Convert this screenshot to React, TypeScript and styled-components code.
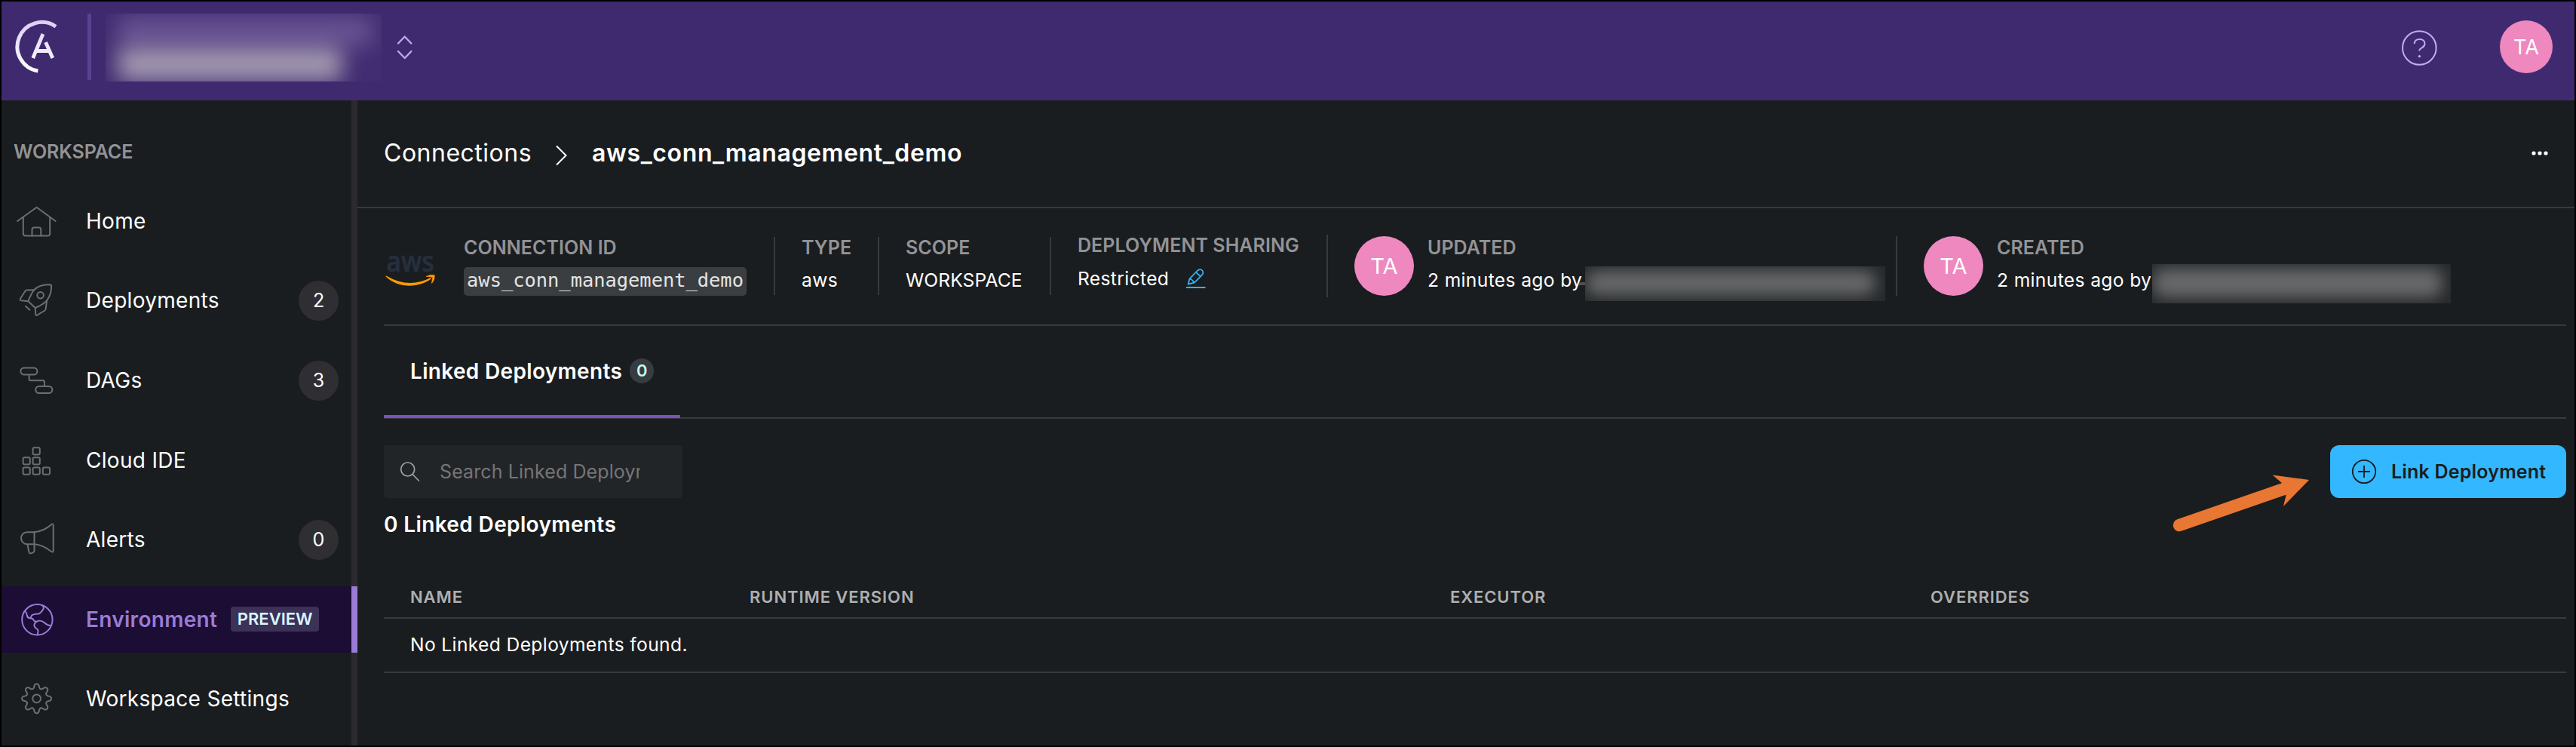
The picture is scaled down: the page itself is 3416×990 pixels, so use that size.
import React from "react";
import styled, { createGlobalStyle } from "styled-components";

const color = {
  bg: "#1a1d1f",
  header: "#3f2a70",
  line: "#38393d",
  muted: "#929396",
  icon: "#6d6e71",
  lilac: "#9a7bd6",
  pink: "#ee88bf",
  blue: "#33b8ff",
};

const GlobalStyle = createGlobalStyle`
  *, *::before, *::after { box-sizing: border-box; }
  body {
    margin: 0;
    background: #000;
    font-family: Inter, "Liberation Sans", sans-serif;
  }
`;

const Page = styled.div`
  display: flex;
  flex-direction: column;
  width: 3416px;
  height: 990px;
  border: 2px solid #000;
  background: ${color.bg};
  color: #fff;
  overflow: hidden;
`;

const Header = styled.header`
  display: flex;
  flex: none;
  height: 131px;
  padding: 0 29px 0 17px;
  background: ${color.header};
`;

const Logo = styled.svg`
  width: 60px;
  height: 76px;
  margin-top: 22px;
`;

const HeaderDivider = styled.div`
  width: 5px;
  height: 88px;
  margin: 16px 19px 0 37px;
  background: #5a4191;
`;

const RedactedName = styled.div`
  display: flex;
  flex-direction: column;
  width: 366px;
  height: 90px;
  margin-top: 16px;
  padding: 4px 10px 0 16px;
  background: #422d72;
  overflow: hidden;
`;

const Smudge = styled.div<{ $w: number; $h: number; $tint: string; $blur: number }>`
  flex: none;
  width: ${(p) => p.$w}px;
  height: ${(p) => p.$h}px;
  border-radius: 12px;
  background: ${(p) => p.$tint};
  filter: blur(${(p) => p.$blur}px);
`;

const Switcher = styled.svg`
  width: 24px;
  height: 36px;
  margin: 43px auto 0 19px;
`;

const HelpIcon = styled.svg`
  width: 48px;
  height: 48px;
  margin: 37px 83px 0 0;
`;

const Avatar = styled.div<{ $size: number; $font: number }>`
  display: flex;
  flex: none;
  align-items: center;
  justify-content: center;
  width: ${(p) => p.$size}px;
  height: ${(p) => p.$size}px;
  border-radius: 50%;
  background: ${color.pink};
  font-size: ${(p) => p.$font}px;
`;

const HeaderAvatar = styled(Avatar)`
  margin-top: 25px;
`;

const Body = styled.div`
  display: flex;
  flex: 1;
  min-height: 0;
`;

const Sidebar = styled.nav`
  display: flex;
  flex-direction: column;
  flex: none;
  width: 472px;
  box-shadow: inset -8px 0 0 #2b2b2f;
`;

const SidebarTitle = styled.div`
  height: 118px;
  padding: 48px 0 0 16px;
  color: ${color.muted};
  font-size: 25px;
  font-weight: 600;
  line-height: 40px;
  letter-spacing: -0.1px;
`;

const NavItem = styled.a<{ $active?: boolean }>`
  display: flex;
  flex: none;
  align-items: center;
  height: 88px;
  margin-bottom: 17.6px;
  padding: 0 25px 0 20px;
  color: ${(p) => (p.$active ? color.lilac : "#fff")};
  background: ${(p) => (p.$active ? "#1b0d34" : "transparent")};
  box-shadow: ${(p) => (p.$active ? `inset -8px 0 0 ${color.lilac}` : "none")};
  font-size: 28px;
  font-weight: ${(p) => (p.$active ? 600 : 400)};
  letter-spacing: 0.3px;
`;

const NavIcon = styled.svg<{ $active?: boolean }>`
  flex: none;
  width: 54px;
  height: 54px;
  margin-right: 38px;
  fill: none;
  stroke: ${(p) => (p.$active ? color.lilac : color.icon)};
  stroke-width: 2;
  stroke-linecap: round;
  stroke-linejoin: round;
`;

const NavCount = styled.span`
  display: flex;
  align-items: center;
  justify-content: center;
  width: 53px;
  height: 53px;
  margin-left: auto;
  border-radius: 50%;
  background: #2e2e33;
  font-size: 25px;
  letter-spacing: 0;
`;

const PreviewTag = styled.span`
  width: 117px;
  height: 33px;
  margin: -1px 0 0 18px;
  border-radius: 4px;
  background: #3c3157;
  color: #d9f6ff;
  font-size: 22px;
  font-weight: 600;
  line-height: 33px;
  letter-spacing: 0;
  text-align: center;
`;

const Main = styled.main`
  display: flex;
  flex: 1;
  flex-direction: column;
  min-width: 0;
`;

const Breadcrumb = styled.div`
  display: flex;
  flex: none;
  align-items: center;
  height: 143px;
  padding: 0 33px 2px 35px;
  border-bottom: 2px solid ${color.line};
  font-size: 32px;
`;

const Crumb = styled.span<{ $current?: boolean }>`
  font-weight: ${(p) => (p.$current ? 600 : 400)};
  letter-spacing: ${(p) => (p.$current ? 0.62 : 0.5)}px;
`;

const CrumbChevron = styled.svg`
  width: 20px;
  height: 30px;
  margin: 6px 31px 0 29px;
`;

const MoreIcon = styled.svg`
  width: 26px;
  height: 8px;
  margin-left: auto;
`;

const Content = styled.div`
  display: flex;
  flex-direction: column;
  padding: 0 11px 0 35px;
`;

const InfoRow = styled.section`
  display: flex;
  align-items: center;
  height: 156px;
  padding-bottom: 1px;
  border-bottom: 2px solid ${color.line};
`;

const AwsLogo = styled.svg`
  flex: none;
  width: 70px;
  height: 50px;
  margin: 16px 36px 0 0;
  overflow: visible;
`;

const Stat = styled.div<{ $w: number; $h: number; $pad: number; $gap?: number }>`
  display: flex;
  flex: none;
  flex-direction: column;
  gap: ${(p) => p.$gap ?? 9}px;
  width: ${(p) => p.$w}px;
  height: ${(p) => p.$h}px;
  padding-left: ${(p) => p.$pad}px;
  border-right: 2px solid ${color.line};
`;

const UserStat = styled.div<{ $w: number; $last?: boolean }>`
  display: flex;
  flex: none;
  width: ${(p) => p.$w}px;
  height: 79px;
  padding-left: 35px;
  border-right: ${(p) => (p.$last ? "none" : `2px solid ${color.line}`)};
`;

const UserText = styled.div`
  display: flex;
  flex-direction: column;
  gap: 9px;
  padding: 1px 0 0 18px;
`;

const StatLabel = styled.div`
  color: ${color.muted};
  font-size: 25px;
  font-weight: 600;
  line-height: 29px;
  letter-spacing: 0.05px;
  white-space: nowrap;
`;

const StatValue = styled.div<{ $caps?: boolean }>`
  display: flex;
  align-items: flex-start;
  height: 39px;
  font-size: 24.6px;
  line-height: 39px;
  letter-spacing: ${(p) => (p.$caps ? 0.1 : 0.36)}px;
  white-space: nowrap;
`;

const Timestamp = styled.span<{ $w: number }>`
  width: ${(p) => p.$w}px;
`;

const EmailEdge = styled.span`
  width: 8px;
  height: 4px;
  margin: 22px 0 0 -8px;
  background: #4d4f51;
`;

const Code = styled.code`
  width: 375px;
  height: 38px;
  margin-top: 2px;
  border-radius: 5px;
  background: #3b3e41;
  color: #e4e4e5;
  font-family: "DejaVu Sans Mono", monospace;
  font-size: 25.4px;
  line-height: 35px;
  letter-spacing: 0;
  text-align: center;
`;

const EditIcon = styled.svg`
  width: 28px;
  height: 28px;
  margin: 6px 0 0 23px;
`;

const RedactedUser = styled.div<{ $w: number; $h: number; $top: number }>`
  flex: none;
  width: ${(p) => p.$w}px;
  height: ${(p) => p.$h}px;
  margin-top: ${(p) => p.$top}px;
  padding: 6px 0 0 2px;
  background: #26292b;
  overflow: hidden;
`;

const Tabs = styled.div`
  display: flex;
  height: 123px;
  border-bottom: 2px solid ${color.line};
`;

const Tab = styled.div`
  display: flex;
  align-items: center;
  width: 393px;
  height: 122px;
  padding: 1px 0 0 35px;
  border-bottom: 4px solid #7a52bd;
  font-size: 28px;
  font-weight: 600;
  letter-spacing: 0.33px;
  white-space: nowrap;
`;

const TabCount = styled.span`
  width: 32px;
  height: 33px;
  margin-left: 10px;
  border-radius: 17px;
  background: #363c3f;
  color: #c8f5ee;
  font-size: 22px;
  line-height: 33px;
  letter-spacing: 0;
  text-align: center;
`;

const Toolbar = styled.div`
  display: flex;
  align-items: flex-start;
  height: 70px;
  margin-top: 35px;
`;

const SearchBox = styled.div`
  display: flex;
  align-items: center;
  width: 396px;
  height: 70px;
  margin-right: auto;
  padding: 0 0 0 21px;
  border-radius: 4px;
  background: #222528;
`;

const SearchIcon = styled.svg`
  width: 28px;
  height: 28px;
  margin: -1px 25px 0 0;
`;

const SearchPlaceholder = styled.span`
  width: 266px;
  color: #757577;
  font-size: 25px;
  line-height: 34px;
  letter-spacing: 0.1px;
  white-space: nowrap;
  overflow: hidden;
`;

const Arrow = styled.svg`
  width: 190px;
  height: 90px;
  margin: 36px 20px 0 0;
  overflow: visible;
`;

const LinkButton = styled.button`
  display: flex;
  align-items: center;
  width: 313px;
  height: 70px;
  padding: 0 0 0 28px;
  border: 0;
  border-radius: 12px;
  background: ${color.blue};
  color: #1a1d20;
  font: 600 25px/34px Inter, sans-serif;
  letter-spacing: 0.2px;
  white-space: nowrap;
`;

const PlusIcon = styled.svg`
  width: 34px;
  height: 34px;
  margin-right: 19px;
`;

const ListTitle = styled.h2`
  margin: 15px 0 49px;
  font-size: 28px;
  font-weight: 600;
  line-height: 40px;
  letter-spacing: 0.37px;
`;

const Columns = styled.div`
  display: grid;
  grid-template-columns: 450px 929px 637px 1fr;
  height: 56px;
  padding-left: 35px;
  border-bottom: 2px solid ${color.line};
  color: #aeafb1;
  font-size: 22px;
  font-weight: 600;
  line-height: 54px;
  letter-spacing: 0.92px;
`;

const EmptyRow = styled.div`
  height: 72px;
  padding-left: 35px;
  border-bottom: 2px solid ${color.line};
  font-size: 24.6px;
  line-height: 69px;
  letter-spacing: 0.37px;
`;

const gearPath = (() => {
  const points: string[] = [];
  for (let i = 0; i < 144; i++) {
    const t = (i / 144) * Math.PI * 2;
    const c = Math.cos(8 * t);
    const r = 16.6 + 2.9 * Math.sign(c) * Math.pow(Math.abs(c), 0.65);
    points.push(`${(26.6 + r * Math.cos(t)).toFixed(2)} ${(26.8 + r * Math.sin(t)).toFixed(2)}`);
  }
  return `M${points.join("L")}Z`;
})();

const ideCells = [
  [26.2, 14.8],
  [13.2, 27.8],
  [26.2, 27.8],
  [13.2, 41.2],
  [26.2, 41.2],
  [39.4, 41.2],
];

type NavEntry = { label: string; count?: number; active?: boolean; icon: React.ReactNode };

const nav: NavEntry[] = [
  {
    label: "Home",
    icon: (
      <>
        <path d="M1.2 27L26.6 8.8L51.6 27" />
        <path d="M8.8 22V43.5a3 3 0 0 0 3 3H41.2a3 3 0 0 0 3-3V22" />
        <path d="M20.5 46.5V38.5a3 3 0 0 1 3-3H29.3a3 3 0 0 1 3 3V46.5" />
      </>
    ),
  },
  {
    label: "Deployments",
    count: 2,
    icon: (
      <>
        <path d="M45.2 6.4C36 5.6 27.500 8.600 23 13.500C19.500 18 17.500 22.500 15.400 28.200L24.700 37C31 34.500 36.500 31.500 40.200 27.200C44.500 21 46.600 14 46.100 7.400Q46 6.500 45.200 6.400Z" />
        <circle cx="31.600" cy="20.300" r="4.300" />
        <path d="M23 13.300L13.500 13.600Q12 13.700 11.300 15L4.900 25Q4.400 26.800 6 27.200L15.400 28.200" />
        <path d="M24.700 37L25.300 45.500Q25.600 47.600 27.400 46.600L37.400 40.500Q38.600 39.600 38.700 38.200L40.200 27.200" />
        <path d="M12 34.700L17.400 39.800" />
      </>
    ),
  },
  {
    label: "DAGs",
    count: 3,
    icon: (
      <>
        <rect x="5.400" y="10.500" width="22" height="9" rx="4.500" />
        <rect x="25.300" y="35" width="22" height="9" rx="4.500" />
        <path d="M16.600 20V25.500Q16.600 27.300 18.400 27.300H35.100Q36.900 27.300 36.900 29.100V34.600" />
      </>
    ),
  },
  {
    label: "Cloud IDE",
    icon: ideCells.map(([x, y]) => (
      <rect key={`${x}-${y}`} x={x - 4.6} y={y - 4.6} width="9.2" height="9.2" rx="2" />
    )),
  },
  {
    label: "Alerts",
    count: 0,
    icon: (
      <>
        <path d="M23.500 17.200H14a8 8 0 0 0 0 16H23.500" />
        <path d="M23.500 17.200C33 16.500 40 12.500 46 7.200Q48.700 5.500 48.700 8.500V42Q48.700 44.500 46 43C40 38 33 33.800 23.500 33.200Z" />
        <path d="M14.400 33.800L16.500 43.800Q17 45.600 18.500 45.400L21.500 44.600Q23.300 44 23.500 42.200V33.200" />
      </>
    ),
  },
  {
    label: "Environment",
    active: true,
    icon: (
      <>
        <circle cx="27.400" cy="27.300" r="20.200" />
        <path d="M34 8.300Q37.500 10.500 34.600 14.500C32.500 17 31.500 19.300 28.500 19.600C23 20 20 20.500 19.600 22.500Q19.300 24.500 17.800 25.200" />
        <path d="M11.300 15.500Q13.600 18.500 13.800 21.500Q14.300 25 17.800 25.200Q22 25.200 22.700 28Q23.300 29.800 26 29.600" />
        <path d="M45.600 35.400C41 34.500 38.500 33 36.500 31C34 29 30 28 27.500 29.300C24.500 30.800 23 33 23.600 35.800C24 38.500 27.500 38.800 28.500 41.500C29 43.500 27.500 44.800 27.900 47.300" />
      </>
    ),
  },
  {
    label: "Workspace Settings",
    icon: (
      <>
        <path d={gearPath} />
        <circle cx="26.600" cy="26.800" r="5.400" />
      </>
    ),
  },
];

export default function App() {
  return (
    <>
      <GlobalStyle />
      <Page>
        <Header>
          <Logo viewBox="19 24 60 76" fill="none" stroke="url(#logoFill)">
            <defs>
              <linearGradient id="logoFill" gradientUnits="userSpaceOnUse" x1="48" y1="27" x2="48" y2="97">
                <stop offset="0" stopColor="#dccff5" />
                <stop offset="1" stopColor="#ffffff" />
              </linearGradient>
            </defs>
            <path d="M74 35.200A32.500 32.500 0 1 0 50.300 94" strokeWidth="5" />
            <path d="M43.700 77L57 45M60.600 56L69.800 77M49 67.500H66" strokeWidth="4.800" />
          </Logo>
          <HeaderDivider />
          <RedactedName>
            <Smudge $w={338} $h={40} $tint="rgba(130,108,168,0.6)" $blur={14} />
            <Smudge $w={298} $h={46} $tint="rgba(165,156,178,0.95)" $blur={14} />
          </RedactedName>
          <Switcher viewBox="525 45 24 36" fill="none" stroke="#c6aaf7" strokeWidth="2.2" strokeLinecap="round" strokeLinejoin="round">
            <path d="M528 57.500L536.700 48.500L545.400 57.500M528 68L536.700 77L545.400 68" />
          </Switcher>
          <HelpIcon viewBox="0 0 48 48" fill="none" stroke="#c6aaf7" strokeWidth="2" strokeLinecap="round">
            <circle cx="24.300" cy="24.500" r="22.300" />
            <path d="M17.600 18.200C18.300 14.500 21 12.900 24.600 12.900C28.700 12.900 31.500 15.400 31.500 19C31.500 24.500 25.500 23.800 24.300 27.500" />
            <circle cx="24.400" cy="35.600" r="1.700" fill="#c6aaf7" stroke="none" />
          </HelpIcon>
          <HeaderAvatar $size={70} $font={27}>TA</HeaderAvatar>
        </Header>
        <Body>
          <Sidebar>
            <SidebarTitle>WORKSPACE</SidebarTitle>
            {nav.map((item) => (
              <NavItem key={item.label} $active={item.active}>
                <NavIcon viewBox="0 0 54 54" $active={item.active}>
                  {item.icon}
                </NavIcon>
                {item.label}
                {item.count !== undefined && <NavCount>{item.count}</NavCount>}
                {item.active && <PreviewTag>PREVIEW</PreviewTag>}
              </NavItem>
            ))}
          </Sidebar>
          <Main>
            <Breadcrumb>
              <Crumb>Connections</Crumb>
              <CrumbChevron viewBox="0 0 20 30" fill="none" stroke="#fff" strokeWidth="2">
                <path d="M4 2.500L16.500 15L4 27.500" />
              </CrumbChevron>
              <Crumb $current>aws_conn_management_demo</Crumb>
              <MoreIcon viewBox="0 0 26 8" fill="#fff">
                <circle cx="5" cy="4" r="2.600" />
                <circle cx="13" cy="4" r="2.600" />
                <circle cx="21" cy="4" r="2.600" />
              </MoreIcon>
            </Breadcrumb>
            <Content>
              <InfoRow>
                <AwsLogo viewBox="509 335 70 50">
                  <text x="512.500" y="358.500" fill="#252f3e" stroke="#252f3e" strokeWidth="0.700" fontFamily="Open Sans" fontWeight="600" fontSize="37" textLength="63" lengthAdjust="spacingAndGlyphs">
                    aws
                  </text>
                  <path d="M511.700 364.200Q542 382 570 367.500Q572.500 366.800 571.500 368.800C556 380.500 528 382 511.700 365.500Z" fill="#ff9900" />
                  <path d="M565 365.500Q571 362 576.200 363.700Q577.200 369 572.600 374.500Q572.200 374 573.800 367Q572 365.300 565 365.500Z" fill="#ff9900" stroke="#ff9900" strokeWidth="0.600" />
                </AwsLogo>
                <Stat $w={413} $h={77} $pad={0}>
                  <StatLabel>CONNECTION ID</StatLabel>
                  <StatValue>
                    <Code>aws_conn_management_demo</Code>
                  </StatValue>
                </Stat>
                <Stat $w={138} $h={77} $pad={35}>
                  <StatLabel>TYPE</StatLabel>
                  <StatValue>aws</StatValue>
                </Stat>
                <Stat $w={228} $h={77} $pad={35}>
                  <StatLabel>SCOPE</StatLabel>
                  <StatValue $caps>WORKSPACE</StatValue>
                </Stat>
                <Stat $w={367} $h={83} $pad={35} $gap={10}>
                  <StatLabel>DEPLOYMENT SHARING</StatLabel>
                  <StatValue>
                    Restricted
                    <EditIcon viewBox="0 0 28 28" fill="none" stroke="#33b0f5" strokeWidth="1.800" strokeLinejoin="round">
                      <path d="M2.600 20.500L4.600 13.300L14.500 3Q18.500 -0.500 21.300 2.500Q23.800 5.500 20.600 8.800L10.800 18.700Z" />
                      <path d="M13 4.800L19.200 10.500M4.600 13.500Q8.500 14.500 10.600 18.500" />
                      <path d="M0 25H25.500" strokeWidth="2" />
                    </EditIcon>
                  </StatValue>
                </Stat>
                <UserStat $w={755}>
                  <Avatar $size={79} $font={29}>TA</Avatar>
                  <UserText>
                    <StatLabel>UPDATED</StatLabel>
                    <StatValue>
                      <Timestamp $w={209}>2 minutes ago by</Timestamp>
                      <EmailEdge />
                      <RedactedUser $w={398} $h={46} $top={1}>
                        <Smudge $w={382} $h={32} $tint="#68696b" $blur={10} />
                      </RedactedUser>
                    </StatValue>
                  </UserText>
                </UserStat>
                <UserStat $w={740} $last>
                  <Avatar $size={79} $font={29}>TA</Avatar>
                  <UserText>
                    <StatLabel>CREATED</StatLabel>
                    <StatValue>
                      <Timestamp $w={206}>2 minutes ago by</Timestamp>
                      <RedactedUser $w={396} $h={52} $top={-2}>
                        <Smudge $w={382} $h={38} $tint="#68696b" $blur={10} />
                      </RedactedUser>
                    </StatValue>
                  </UserText>
                </UserStat>
              </InfoRow>
              <Tabs>
                <Tab>
                  Linked Deployments
                  <TabCount>0</TabCount>
                </Tab>
              </Tabs>
              <Toolbar>
                <SearchBox>
                  <SearchIcon viewBox="0 0 28 28" fill="none" stroke="#a2a3a5" strokeWidth="1.700">
                    <circle cx="10.700" cy="11" r="9" />
                    <path d="M17 17.500L25.800 26.500" />
                  </SearchIcon>
                  <SearchPlaceholder>Search Linked Deployments</SearchPlaceholder>
                </SearchBox>
                <Arrow viewBox="2880 626 190 90">
                  <path d="M2890 696L3030 647.500" stroke="#e87733" strokeWidth="16.500" strokeLinecap="round" />
                  <path d="M3062 636L3013.500 629.500L3027 641L3032 654L3028 671Z" fill="#e87733" />
                </Arrow>
                <LinkButton>
                  <PlusIcon viewBox="0 0 34 34" fill="none" stroke="#1a1d20" strokeWidth="1.800">
                    <circle cx="17" cy="17" r="15.200" />
                    <path d="M9 17H25M17 9V25" />
                  </PlusIcon>
                  Link Deployment
                </LinkButton>
              </Toolbar>
              <ListTitle>0 Linked Deployments</ListTitle>
              <Columns>
                <span>NAME</span>
                <span>RUNTIME VERSION</span>
                <span>EXECUTOR</span>
                <span>OVERRIDES</span>
              </Columns>
              <EmptyRow>No Linked Deployments found.</EmptyRow>
            </Content>
          </Main>
        </Body>
      </Page>
    </>
  );
}
